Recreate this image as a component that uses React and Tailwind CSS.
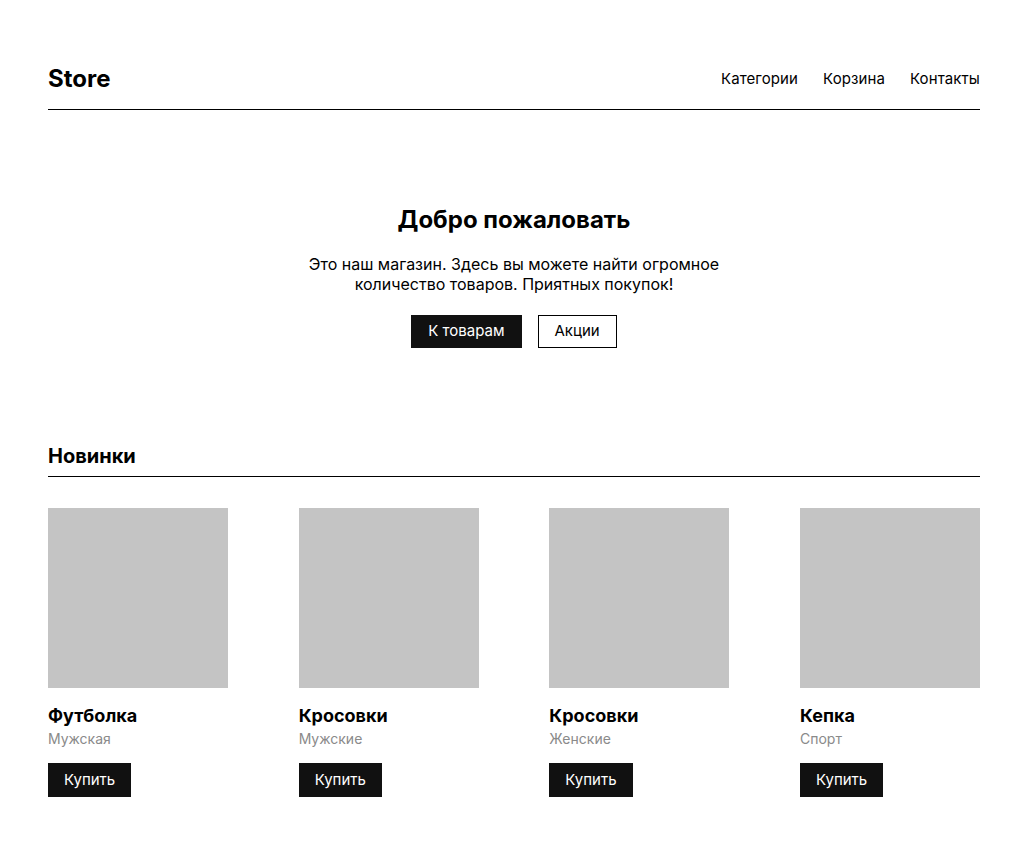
const products = [
  { title: "Футболка", sub: "Мужская" },
  { title: "Кросовки", sub: "Мужские" },
  { title: "Кросовки", sub: "Женские" },
  { title: "Кепка", sub: "Спорт" },
];

const App = () => {
  return (
    <div className="min-h-screen bg-white text-black font-['Inter',sans-serif]">
      <div className="mx-[48px] pb-10">
        <header className="pt-[63px] pb-[14px] border-b border-black flex items-center justify-between">
          <h1 className="text-2xl leading-8 font-bold">Store</h1>
          <nav className="flex items-center gap-[25px] text-[15px] leading-5 tracking-[0.1px]">
            <a href="#">Категории</a>
            <a href="#">Корзина</a>
            <a href="#">Контакты</a>
          </nav>
        </header>

        <section className="pt-[94px] flex flex-col items-center text-center">
          <h2 className="text-2xl leading-8 font-bold">Добро пожаловать</h2>
          <p className="mt-[18px] max-w-[440px] text-base leading-5">
            Это наш магазин. Здесь вы можете найти огромное количество товаров. Приятных покупок!
          </p>
          <div className="mt-[21px] flex gap-4">
            <button className="h-[33px] px-4 bg-[#111111] text-white text-[15px] border border-[#111111]">К товарам</button>
            <button className="h-[33px] px-4 bg-white text-black text-[15px] border border-black">Акции</button>
          </div>
        </section>

        <section className="pt-[94px]">
          <h3 className="text-xl leading-7 font-bold pb-[6px] border-b border-black">Новинки</h3>
          <div className="mt-[31px] flex justify-between">
            {products.map((p, i) => (
              <div key={i} className="w-[180px]">
                <div className="w-[180px] h-[180px] bg-[#c4c4c4]" />
                <div className="mt-4 text-lg leading-6 font-bold">{p.title}</div>
                <div className="mt-px text-sm leading-5 text-[#8a8a8a]">{p.sub}</div>
                <button className="mt-[14px] h-[34px] px-4 bg-[#111111] text-white text-[15px]">Купить</button>
              </div>
            ))}
          </div>
        </section>
      </div>
    </div>
  );
};

export default App;
